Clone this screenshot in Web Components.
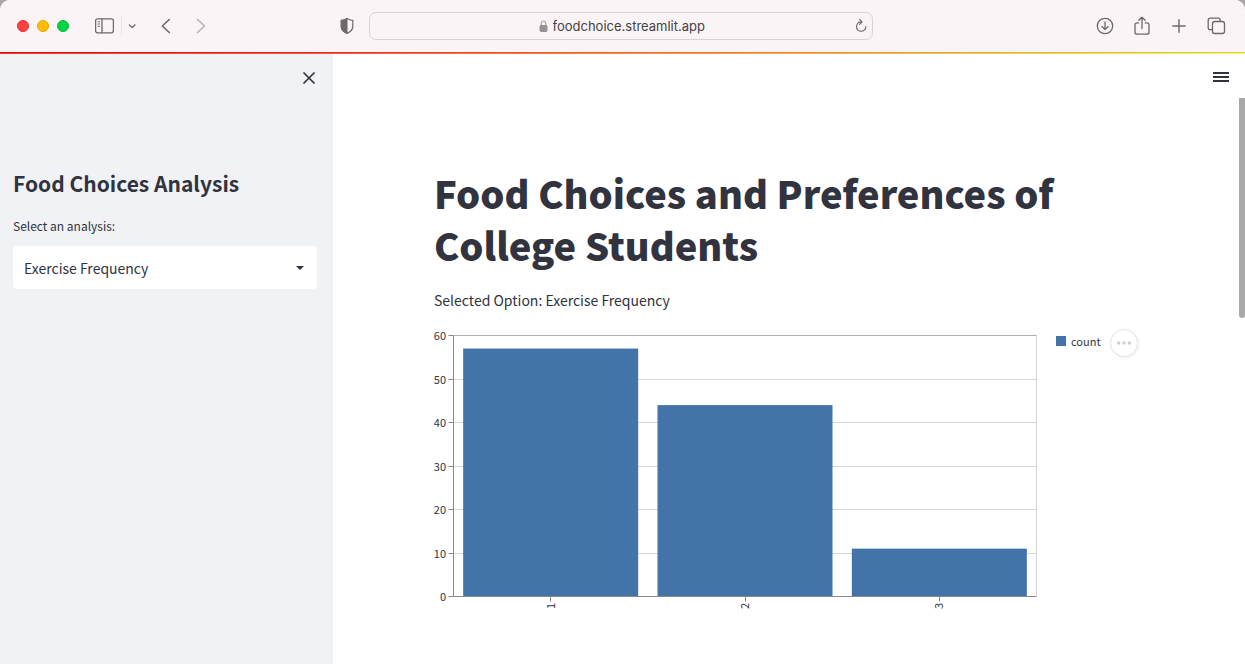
<!DOCTYPE html>
<html lang="en">
<head>
<meta charset="utf-8">
<title>Food Choices Analysis</title>
<style>
  html, body { margin: 0; height: 100%; }
  body { background: #a9a7a9; color: #31333f; font-family: "Noto Sans CJK SC", "Open Sans", sans-serif; }
</style>
</head>
<body>
<browser-window>
  <browser-toolbar slot="toolbar" address="foodchoice.streamlit.app"></browser-toolbar>
  <app-sidebar>
    <span slot="title">Food Choices Analysis</span>
    <analysis-select label="Select an analysis:"></analysis-select>
  </app-sidebar>
  <app-main>
    <span slot="title">Food Choices and Preferences of College Students</span>
    <span slot="lead">Selected Option: Exercise Frequency</span>
    <bar-chart values="57,44,11" series="count"></bar-chart>
  </app-main>
</browser-window>

<script>
class Base extends HTMLElement {
  connectedCallback() {
    if (!this.shadowRoot) this.attachShadow({ mode: "open" }).innerHTML = this.render();
  }
}

customElements.define("browser-window", class extends Base {
  render() {
    return `<style>
      :host { display: flex; flex-direction: column; height: 100vh; border-radius: 10px 10px 0 0; overflow: hidden; background: #fff; }
      .line { flex: none; height: 1px; background: linear-gradient(90deg, #d9101c, #e02a20 24%, #e8742f 52%, #e2a03a 72%, #d6d640); }
      .line.low { background: linear-gradient(90deg, #f8342c, #fb5540 24%, #f99052 52%, #f8b850 72%, #f6f662); }
      .view { flex: 1; min-height: 0; display: flex; }
    </style>
    <slot name="toolbar"></slot>
    <div class="line"></div><div class="line low"></div>
    <div class="view"><slot></slot></div>`;
  }
});

customElements.define("browser-toolbar", class extends Base {
  render() {
    return `<style>
      :host { flex: none; display: grid; grid-template-columns: 1fr 504px 1fr; align-items: center; box-sizing: border-box; height: 52px; padding-right: 3px; background: #faf4f6; color: #6e686a; }
      .group { display: flex; align-items: center; }
      button { display: flex; padding: 0; border: 0; background: none; color: inherit; }
      svg { display: block; fill: none; stroke: currentColor; stroke-linecap: round; stroke-linejoin: round; }
      .left { padding-left: 17px; }
      .lights { display: flex; gap: 8px; margin-right: 26px; }
      .lights button { width: 12px; height: 12px; border-radius: 50%; box-sizing: border-box; }
      .red { background: #ff4141; border: 1px solid #ee2a2e; }
      .amber { background: #ffbd05; border: 1px solid #eaa500; }
      .green { background: #04d345; border: 1px solid #08bb38; }
      .rule { width: 1px; height: 18px; margin: 0 6px 0 7px; background: #e9e2e4; }
      .back { margin-left: 24px; }
      .next { margin-left: 22px; color: #b8b2b4; }
      .shield { margin: 0 14px 0 auto; }
      .address { display: flex; align-items: center; justify-content: center; box-sizing: border-box; height: 28px; padding: 0 5px 0 20px; border: 1px solid #d9d3d5; border-radius: 7px; }
      .address label { display: flex; align-items: center; gap: 5px; margin: 0 auto; color: #979193; }
      input { width: 154px; padding: 0; border: 0; outline: 0; background: none; color: #454244; font: 13px/20px Inter, sans-serif; }
      .right { justify-content: flex-end; gap: 17px; padding-right: 16px; }
    </style>
    <div class="group left">
      <div class="lights"><button class="red" aria-label="Close"></button><button class="amber" aria-label="Minimise"></button><button class="green" aria-label="Zoom"></button></div>
      <button aria-label="Sidebar"><svg width="19" height="16"><rect x=".6" y=".8" width="17.8" height="14" rx="2" stroke-width="1.3"/><path d="M7 1v13.6" stroke-width="1.3"/><path d="M3 3.7h1.6M3 6h1.6M3 8.3h1.6" stroke-width="1"/></svg></button>
      <span class="rule"></span>
      <button aria-label="Tab groups"><svg width="8" height="8" stroke-width="1.3"><path d="M1.4 2.9 4.2 5.4 7 2.9"/></svg></button>
      <button class="back" aria-label="Back"><svg width="12" height="16" stroke-width="1.6"><path d="M9.3 1.5 2.3 8l7 6.5"/></svg></button>
      <button class="next" aria-label="Forward"><svg width="14" height="16" stroke-width="1.6"><path d="M3.5 1.5 10.5 8l-7 6.5"/></svg></button>
      <button class="shield" aria-label="Privacy report"><svg width="16" height="18"><path d="M8 1.5C6 2.8 4 3.2 2.2 3.4v6c0 3.4 2.8 5.6 5.8 7 3-1.4 5.8-3.6 5.8-7v-6C12 3.2 10 2.8 8 1.5z" stroke-width="1.2"/><path d="M8 1.5C6 2.8 4 3.2 2.2 3.4v6c0 3.4 2.8 5.6 5.8 7z" fill="currentColor" stroke-width=".6"/></svg></button>
    </div>
    <div class="address">
      <label><svg width="9" height="13"><rect x="1" y="5.5" width="7" height="6" rx="1" fill="currentColor"/><path d="M2.2 5.5V3.3a2.3 2.3 0 0 1 4.6 0v2.2" stroke-width="1"/></svg>
      <input aria-label="Address" value="${this.getAttribute("address")}"></label>
      <button aria-label="Reload"><svg width="12" height="16" stroke-width="1.1"><path d="M6.4 3.9a4.7 4.7 0 1 0 4.5 4.7M4.6 1.3l2.5 2.6-2.5 2.5"/></svg></button>
    </div>
    <div class="group right">
      <button aria-label="Downloads"><svg width="20" height="20" stroke-width="1.3"><circle cx="10" cy="10" r="7.7"/><path d="M10 6v7.3M7 10.5l3 3 3-3"/></svg></button>
      <button aria-label="Share"><svg width="20" height="22" stroke-width="1.3"><path d="M6.700 7.900H5.200c-1.500 0-2.200.7-2.200 2v7.300c0 1.400.7 2 2.200 2h9.600c1.500 0 2.200-.6 2.200-2V9.900c0-1.300-.7-2-2.200-2h-1.500M10 13.500V2.300M6.900 5.200 10 2.200l3.100 3"/></svg></button>
      <button aria-label="New tab"><svg width="20" height="20" stroke-width="1.4"><path d="M10 3.800v12.400M3.800 10h12.400"/></svg></button>
      <button aria-label="Tabs"><svg width="20" height="20" stroke-width="1.3"><rect x="6.500" y="5.500" width="12" height="12" rx="2.200"/><path d="M6.300 13.700H4.200c-1.300 0-2-.7-2-2V4.200c0-1.300.7-2 2-2h8c1.300 0 2 .7 2 2v1"/></svg></button>
    </div>`;
  }
});

customElements.define("app-sidebar", class extends Base {
  render() {
    return `<style>
      :host { flex: none; box-sizing: border-box; width: 333px; padding: 16px 16px 0 13px; background: #f0f2f6; }
      button { display: block; margin: 0 0 0 auto; padding: 0; border: 0; background: none; color: #31333f; }
      svg { display: block; }
      h2 { margin: 83px 0 18px; font-size: 21px; line-height: 28px; font-weight: 700; }
    </style>
    <button aria-label="Close sidebar"><svg width="16" height="16" fill="none" stroke="currentColor" stroke-width="1.7"><path d="M2.5 2.5l11 11M13.5 2.5l-11 11"/></svg></button>
    <h2><slot name="title"></slot></h2>
    <slot></slot>`;
  }
});

customElements.define("analysis-select", class extends Base {
  render() {
    return `<style>
      :host { display: block; }
      label { display: block; margin-bottom: 9px; font-size: 12px; line-height: 22px; }
      .box { display: grid; align-items: center; }
      select, svg { grid-area: 1 / 1; }
      select { appearance: none; width: 100%; height: 43px; padding: 0 11px; border: 0; border-radius: 4px; background: #fff; color: inherit; font: inherit; font-size: 14px; line-height: 22px; }
      svg { justify-self: end; margin-right: 13px; pointer-events: none; }
    </style>
    <label for="pick">${this.getAttribute("label")}</label>
    <div class="box">
      <select id="pick"><option>Exercise Frequency</option></select>
      <svg width="8" height="4"><path d="M0 0h8L4 4z" fill="#31333f"/></svg>
    </div>`;
  }
});

customElements.define("app-main", class extends Base {
  render() {
    return `<style>
      :host { flex: 1; min-width: 0; position: relative; display: flex; flex-direction: column; background: #fff; }
      header { flex: none; display: flex; align-items: center; justify-content: flex-end; height: 44px; padding-right: 16px; }
      button { padding: 0; border: 0; background: none; color: #31333f; }
      svg { display: block; }
      article { flex: 1; min-height: 0; box-sizing: border-box; width: 100%; max-width: 704px; margin: 0 auto; padding-top: 69px; }
      .scroll { flex: 1; min-height: 0; display: flex; padding-right: 6px; overflow: hidden; }
      h1 { margin: 0 0 17px; font-size: 38px; line-height: 52px; font-weight: 900; }
      p { margin: 0 0 16px; font-size: 14px; line-height: 24px; }
      .thumb { position: absolute; right: 0; top: 44px; width: 6px; height: 220px; border-radius: 0 0 3px 3px; background: #a9a9ac; }
    </style>
    <header><button aria-label="Main menu"><svg width="16" height="14" stroke="currentColor" stroke-width="1.8"><path d="M0 4h16M0 8h16M0 12h16"/></svg></button></header>
    <div class="scroll"><article>
      <h1><slot name="title"></slot></h1>
      <p><slot name="lead"></slot></p>
      <slot></slot>
    </article></div>
    <div class="thumb"></div>`;
  }
});

customElements.define("bar-chart", class extends Base {
  render() {
    const values = this.getAttribute("values").split(",").map(Number);
    const left = 19.5, right = 602.5, top = 7.5, bottom = 268.5, max = 60;
    const band = (right - left) / values.length, scale = (bottom - top) / max;
    let grid = "", ticks = "", bars = "";
    for (let v = 0; v <= max; v += 10) {
      const y = Math.floor(bottom - v * scale) + 0.5;
      grid += `<path class="grid" d="M${left} ${y}H${right}"/>`;
      ticks += `<path class="axis" d="M${left - 5} ${y}H${left}"/><text x="12" y="${y + 4}" text-anchor="end">${v}</text>`;
    }
    values.forEach((v, i) => {
      const mid = left + band * (i + 0.5);
      bars += `<rect x="${mid - 87.5}" y="${bottom - v * scale}" width="175" height="${v * scale}"/>`;
      ticks += `<path class="axis" d="M${Math.floor(mid) + 0.5} ${bottom}v5"/><text transform="translate(${mid + 4} 278) rotate(-90)" text-anchor="middle">${i + 1}</text>`;
    });
    return `<style>
      :host { display: flex; align-items: flex-start; }
      .plot { flex: 1; min-width: 0; display: block; }
      text { font-size: 11px; fill: #31333f; }
      .grid { stroke: #d6d6d6; }
      .top { stroke: #b2b2b2; }
      .axis { stroke: #888; }
      rect { fill: #4374a9; }
      .legend { flex: 0 0 43px; min-width: 0; display: flex; align-items: center; gap: 5px; margin: 5px 0 0 18px; font-size: 11px; line-height: 16px; }
      .swatch { flex: none; width: 10px; height: 10px; background: #4374a9; }
      button { flex: none; display: flex; align-items: center; justify-content: center; box-sizing: border-box; width: 28px; height: 28px; margin: 1px 0 0 11px; padding: 0; border: 1px solid #e6e6e6; border-radius: 50%; background: #fff; box-shadow: 1px 1px 3px #0001; }
    </style>
    <svg class="plot" viewBox="0 0 604 286" role="img" aria-label="Bar chart">
      ${grid}<path class="grid" d="M${right} ${top}V${bottom}"/><path class="top" d="M${left} ${top}H${right}"/>
      ${bars}${ticks}
      <path class="axis" d="M${left} ${top}V${bottom}H${right}" fill="none"/>
    </svg>
    <div class="legend"><span class="swatch"></span><span>${this.getAttribute("series")}</span></div>
    <button aria-label="Chart actions"><svg width="14" height="4" fill="#cfcfcf"><circle cx="1.7" cy="2" r="1.7"/><circle cx="7" cy="2" r="1.7"/><circle cx="12.3" cy="2" r="1.7"/></svg></button>`;
  }
});
</script>
</body>
</html>
